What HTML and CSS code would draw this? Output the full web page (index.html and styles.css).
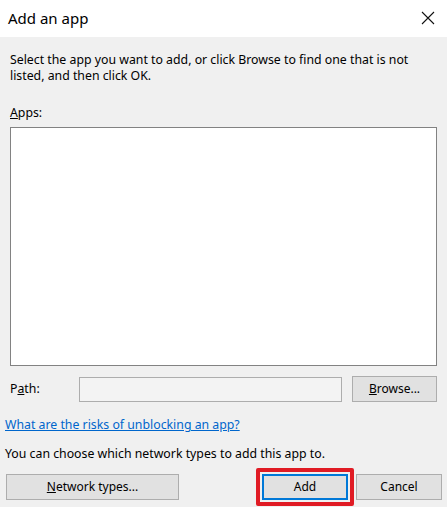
FILE: index.html
```html
<!DOCTYPE html>
<html>
<head>
<meta charset="utf-8">
<link rel="stylesheet" href="styles.css">
</head>
<body>
<div class="window">
  <div class="titlebar">
    <span class="title">Add an app</span>
    <svg class="close" width="14" height="14" viewBox="0 0 14 14"><path d="M1 1 L13 13 M13 1 L1 13" stroke="#111" stroke-width="1.1" fill="none"/></svg>
  </div>
  <div class="content">
    <p class="intro">Select the app you want to add, or click Browse to find one that is not listed, and then click OK.</p>
    <div class="apps-label"><u>A</u>pps:</div>
    <div class="listbox"></div>
    <div class="path-row">
      <span class="path-label">P<u>a</u>th:</span>
      <div class="path-input"></div>
      <button class="btn browse"><u>B</u>rowse...</button>
    </div>
    <a class="link" href="#">What are the risks of unblocking an app?</a>
    <p class="note">You can choose which network types to add this app to.</p>
    <div class="button-row">
      <button class="btn network"><u>N</u>etwork types...</button>
      <div class="right-buttons">
        <span class="highlight"><button class="btn add">Add</button></span>
        <button class="btn cancel">Cancel</button>
      </div>
    </div>
  </div>
</div>
</body>
</html>
```
FILE: styles.css
```css
* { box-sizing: border-box; }
html, body { margin: 0; padding: 0; }
body {
  font-family: "Noto Sans", "Open Sans", sans-serif;
  font-size: 12.3px;
  color: #000;
  background: #f0f0f0;
}
.window {
  width: 447px;
  height: 507px;
  display: flex;
  flex-direction: column;
  background: #f0f0f0;
  overflow: hidden;
}
.titlebar {
  height: 37px;
  background: #fff;
  display: flex;
  align-items: center;
  justify-content: space-between;
  padding: 0 12px 0 8px;
}
.title {
  font-size: 15px;
  color: #000;
  padding-bottom: 2px;
}
.close { display: block; margin-top: -2px; }
.content {
  display: flex;
  flex-direction: column;
  padding-top: 15px;
}
.intro {
  margin: 0 0 0 10px;
  width: 425px;
  line-height: 16px;
}
.apps-label {
  margin: 21px 0 0 10px;
  line-height: 16px;
}
.listbox {
  margin: 6px 10px 0 10px;
  height: 239px;
  background: #fff;
  border: 1px solid #828282;
}
.path-row {
  display: flex;
  align-items: center;
  margin-top: 10px;
  height: 26px;
  padding: 0 10px;
}
.path-label {
  width: 69px;
  padding-bottom: 2px;
}
.path-input {
  width: 263px;
  height: 25px;
  margin-top: 1px;
  background: #f3f3f3;
  border: 1px solid #adadad;
}
.btn {
  font-family: inherit;
  font-size: 12px;
  color: #000;
  background: #e1e1e1;
  border: 1px solid #adadad;
  height: 26px;
  padding: 0 0 2px;
  margin: 0;
}
.browse {
  width: 85px;
  margin-left: 10px;
}
.link {
  margin: 15px 0 0 5px;
  line-height: 16px;
  color: #0066cc;
  text-decoration: underline;
  align-self: flex-start;
}
.note {
  margin: 13px 0 0 5px;
  line-height: 16px;
}
.button-row {
  display: flex;
  align-items: center;
  justify-content: space-between;
  margin-top: 6px;
  padding: 0 5px 0 6px;
}
.network { width: 173px; }
.right-buttons {
  display: flex;
  align-items: center;
  gap: 2px;
}
.highlight {
  display: flex;
  padding: 2px;
  border: 4px solid #e01b24;
  border-radius: 2px;
}
.add {
  width: 86px;
  border: 2px solid #0078d7;
}
.cancel { width: 86px; }
```
